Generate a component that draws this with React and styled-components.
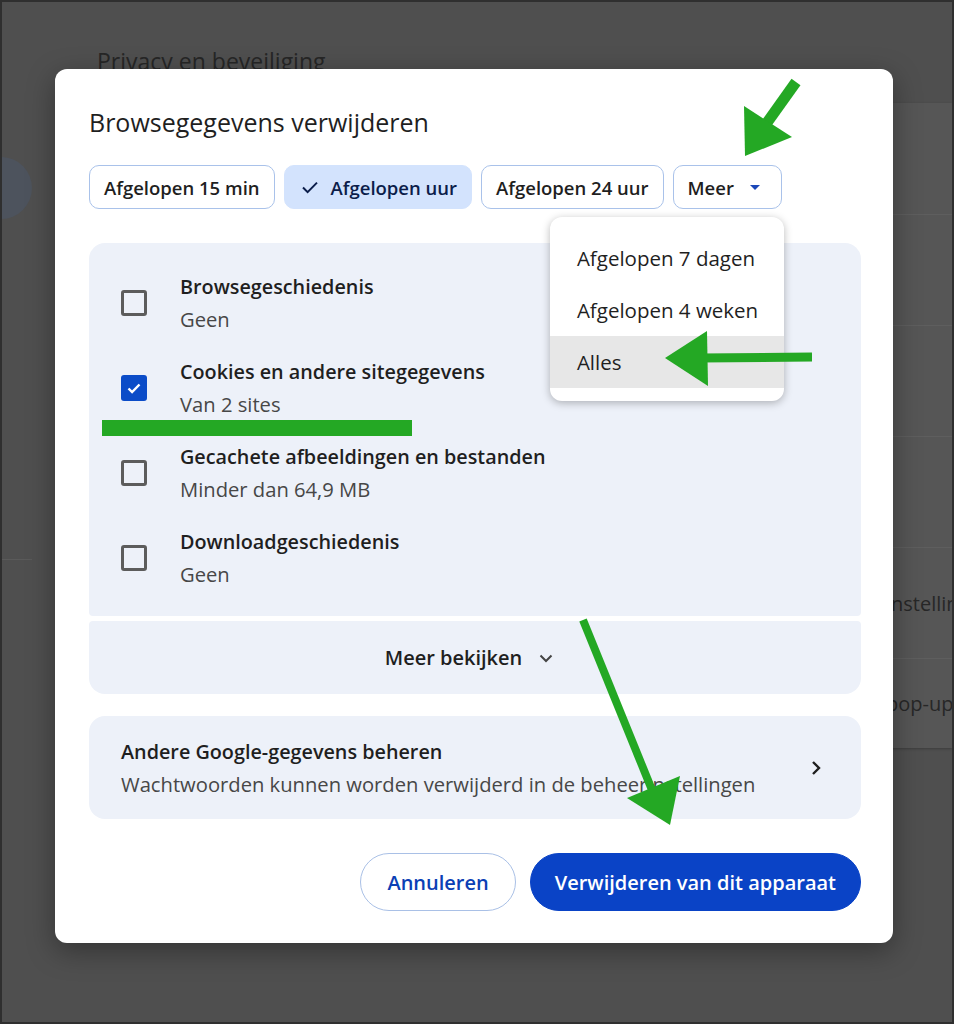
import React from "react";
import styled, { createGlobalStyle } from "styled-components";

const GlobalStyle = createGlobalStyle`
  html, body {
    margin: 0;
    padding: 0;
    background: #2e2e2e;
  }
  body {
    font-family: "Open Sans", "Noto Sans", "Liberation Sans", sans-serif;
    color: #1f1f1f;
  }
  * {
    box-sizing: border-box;
  }
`;

const Frame = styled.div`
  position: relative;
  width: 954px;
  height: 1024px;
  border: 2px solid #2f2f2f;
  background: #4f4f4f;
  overflow: hidden;
`;

/* dimmed settings page behind the dialog */
const Backdrop = styled.div`
  display: flex;
  height: 100%;
`;

const Sidebar = styled.div`
  flex: none;
  width: 40px;
  display: flex;
  flex-direction: column;
  padding-top: 155px;

  .avatar {
    width: 62px;
    height: 62px;
    margin-left: -32px;
    border-radius: 50%;
    background: #4d535d;
  }

  .divider {
    margin-top: 340px;
    height: 1px;
    width: 30px;
    background: #5a5a5a;
  }
`;

const MainCol = styled.div`
  flex: 1;
  min-width: 0;
  padding: 44px 0 0 55px;
`;

const PageHeading = styled.h2`
  margin: 0;
  font-size: 23px;
  line-height: 30px;
  font-weight: 400;
  color: #262626;
`;

const SettingsCard = styled.div`
  margin-top: 27px;
  background: #565656;
  border-radius: 8px 0 0 8px;
  box-shadow: 0 1px 3px rgba(0, 0, 0, 0.25);
`;

const SettingsRow = styled.div`
  height: ${(p) => (p.$last ? "90px" : "111px")};
  display: flex;
  align-items: center;
  padding-left: 789px;
  font-size: 20px;
  color: #272727;
  white-space: nowrap;
  overflow: hidden;
  border-top: ${(p) => (p.$first ? "none" : "1px solid #5e5e5e")};
`;

/* dialog */
const Dialog = styled.div`
  position: absolute;
  left: 53px;
  top: 67px;
  width: 838px;
  height: 874px;
  background: #fff;
  border-radius: 12px;
  box-shadow: 0 8px 28px rgba(0, 0, 0, 0.35);
  padding: 37px 32px 0 34px;
`;

const Title = styled.h1`
  margin: 0;
  font-size: 25px;
  line-height: 32px;
  font-weight: 500;
  color: #1f1f1f;
`;

const ChipRow = styled.div`
  display: flex;
  gap: 9px;
  margin-top: 27px;
`;

const Chip = styled.button`
  height: 44px;
  display: flex;
  align-items: center;
  gap: 11px;
  padding: 0 ${(p) => (p.$selected ? "14px 0 15px" : "14px")};
  border-radius: 10px;
  border: 1px solid ${(p) => (p.$selected ? "#d3e3fd" : "#a9c2ea")};
  background: ${(p) => (p.$selected ? "#d3e3fd" : "#fff")};
  color: ${(p) => (p.$selected ? "#0b1d4a" : "#1f1f1f")};
  font-family: inherit;
  font-size: 18.5px;
  font-weight: 600;
  white-space: nowrap;
`;

const MenuAnchor = styled.div`
  position: relative;
`;

const Caret = styled.span`
  width: 0;
  height: 0;
  margin: 0 7px 0 5px;
  border-left: 5px solid transparent;
  border-right: 5px solid transparent;
  border-top: 5px solid #1a47b8;
`;

const Menu = styled.div`
  position: absolute;
  top: calc(100% + 8px);
  right: -2px;
  width: 234px;
  padding: 15px 0 13px;
  background: #fff;
  border-radius: 12px;
  box-shadow: 0 2px 8px rgba(0, 0, 0, 0.28);
  z-index: 2;
`;

const MenuItem = styled.div`
  height: 52px;
  display: flex;
  align-items: center;
  padding-left: 27px;
  font-size: 20.5px;
  color: #1f1f1f;
  background: ${(p) => (p.$active ? "#e7e7e7" : "transparent")};
`;

const Panel = styled.div`
  margin-top: 34px;
  background: #edf1f9;
  border-radius: 16px 16px 4px 4px;
  padding: 27px 32px 25px;
  display: flex;
  flex-direction: column;
  gap: 19px;
`;

const CheckRow = styled.div`
  display: flex;
  align-items: center;
  gap: 33px;
`;

const Box = styled.span`
  width: 26px;
  height: 26px;
  flex: none;
  border-radius: 3px;
  border: ${(p) => (p.$checked ? "none" : "3px solid #5c5c5c")};
  background: ${(p) => (p.$checked ? "#0b4cc8" : "transparent")};
  display: flex;
  align-items: center;
  justify-content: center;
`;

const ItemText = styled.div`
  display: flex;
  flex-direction: column;
`;

const ItemTitle = styled.div`
  font-size: 19.8px;
  line-height: 33px;
  font-weight: 600;
  color: #1f1f1f;
`;

const ItemSub = styled.div`
  font-size: 20.2px;
  line-height: 33px;
  color: #474747;
`;

const MoreBar = styled.div`
  margin-top: 5px;
  height: 73px;
  background: #edf1f9;
  border-radius: 4px 4px 16px 16px;
  display: flex;
  align-items: center;
  justify-content: center;
  gap: 15px;
  padding-right: 10px;
  font-size: 20px;
  font-weight: 600;
  color: #1f1f1f;
`;

const LinkCard = styled.div`
  margin-top: 22px;
  height: 103px;
  background: #edf1f9;
  border-radius: 16px;
  padding: 0 38px 0 32px;
  display: flex;
  align-items: center;
  justify-content: space-between;
`;

const Actions = styled.div`
  margin-top: 34px;
  display: flex;
  justify-content: flex-end;
  gap: 14px;
`;

const PillButton = styled.button`
  height: 58px;
  padding: 0 ${(p) => (p.$primary ? "24px" : "26px")};
  border-radius: 29px;
  border: 1px solid ${(p) => (p.$primary ? "#0a43c6" : "#a9c0e6")};
  background: ${(p) => (p.$primary ? "#0a43c6" : "#fff")};
  color: ${(p) => (p.$primary ? "#fff" : "#0b3fb5")};
  font-family: inherit;
  font-size: 20px;
  font-weight: 600;
`;

/* green annotation drawn over the screenshot */
const Annotations = styled.svg`
  position: absolute;
  left: -2px;
  top: -2px;
  width: 954px;
  height: 1024px;
  pointer-events: none;
  z-index: 5;
`;

const GREEN = "#24a824";

const items = [
  { title: "Browsegeschiedenis", sub: "Geen" },
  { title: "Cookies en andere sitegegevens", sub: "Van 2 sites", checked: true },
  { title: "Gecachete afbeeldingen en bestanden", sub: "Minder dan 64,9 MB" },
  { title: "Downloadgeschiedenis", sub: "Geen" },
];

function CheckMark() {
  return (
    <svg width="18" height="18" viewBox="0 0 18 18">
      <path d="M3.5 9.5l3.6 3.6L14.5 5.5" fill="none" stroke="#fff" strokeWidth="2.4" />
    </svg>
  );
}

export default function App() {
  return (
    <>
      <GlobalStyle />
      <Frame>
        <Backdrop>
          <Sidebar>
            <div className="avatar" />
            <div className="divider" />
          </Sidebar>
          <MainCol>
            <PageHeading>Privacy en beveiliging</PageHeading>
            <SettingsCard>
              <SettingsRow $first />
              <SettingsRow />
              <SettingsRow />
              <SettingsRow />
              <SettingsRow>instellingen</SettingsRow>
              <SettingsRow $last>pop-ups en omleidingen</SettingsRow>
            </SettingsCard>
          </MainCol>
        </Backdrop>

        <Dialog>
          <Title>Browsegegevens verwijderen</Title>
          <ChipRow>
            <Chip>Afgelopen 15 min</Chip>
            <Chip $selected>
              <svg width="20" height="20" viewBox="0 0 20 20">
                <path d="M3 10.5l4.6 4.6L17 5.6" fill="none" stroke="#0b1d4a" strokeWidth="2" />
              </svg>
              Afgelopen uur
            </Chip>
            <Chip>Afgelopen 24 uur</Chip>
            <MenuAnchor>
              <Chip>
                Meer
                <Caret />
              </Chip>
              <Menu>
                <MenuItem>Afgelopen 7 dagen</MenuItem>
                <MenuItem>Afgelopen 4 weken</MenuItem>
                <MenuItem $active>Alles</MenuItem>
              </Menu>
            </MenuAnchor>
          </ChipRow>

          <Panel>
            {items.map((it) => (
              <CheckRow key={it.title}>
                <Box $checked={it.checked}>{it.checked && <CheckMark />}</Box>
                <ItemText>
                  <ItemTitle>{it.title}</ItemTitle>
                  <ItemSub>{it.sub}</ItemSub>
                </ItemText>
              </CheckRow>
            ))}
          </Panel>
          <MoreBar>
            Meer bekijken
            <svg width="18" height="18" viewBox="0 0 18 18">
              <path d="M3.5 6.5l5.5 5.5 5.5-5.5" fill="none" stroke="#444" strokeWidth="2" />
            </svg>
          </MoreBar>

          <LinkCard>
            <ItemText>
              <ItemTitle>Andere Google-gegevens beheren</ItemTitle>
              <ItemSub>Wachtwoorden kunnen worden verwijderd in de beheerinstellingen</ItemSub>
            </ItemText>
            <svg width="14" height="18" viewBox="0 0 14 18">
              <path d="M4 3l6 6-6 6" fill="none" stroke="#1f1f1f" strokeWidth="2.4" />
            </svg>
          </LinkCard>

          <Actions>
            <PillButton>Annuleren</PillButton>
            <PillButton $primary>Verwijderen van dit apparaat</PillButton>
          </Actions>
        </Dialog>

        <Annotations viewBox="0 0 954 1024">
          <line x1="796" y1="82" x2="766" y2="124" stroke={GREEN} strokeWidth="11" />
          <polygon points="745,156 744,106 792,137" fill={GREEN} />
          <line x1="812" y1="357" x2="700" y2="358" stroke={GREEN} strokeWidth="9" />
          <polygon points="665,358 707,331 708,386" fill={GREEN} />
          <line x1="583" y1="620" x2="652" y2="790" stroke={GREEN} strokeWidth="8" />
          <polygon points="670,825 627,798 680,776" fill={GREEN} />
          <rect x="102" y="420" width="310" height="16" fill={GREEN} />
        </Annotations>
      </Frame>
    </>
  );
}
